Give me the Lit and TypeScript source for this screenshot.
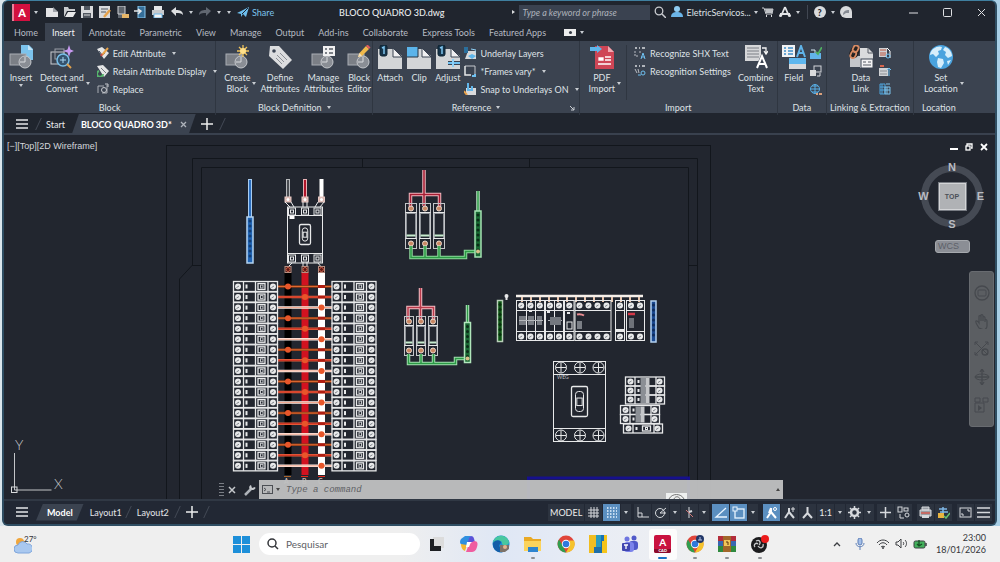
import { LitElement, html, svg, css, type SVGTemplateResult } from "lit";
import { customElement } from "lit/decorators.js";
import { classMap } from "lit/directives/class-map.js";

type Art = SVGTemplateResult;

const base = css`
  * { box-sizing: border-box; }
  :host { display: block; font-family: Lato, "Open Sans", sans-serif; font-size: 9px; line-height: 11px; color: #dfe2e6; }
  button, input { font: inherit; color: inherit; background: none; border: 0; padding: 0; margin: 0; }
  button { display: flex; align-items: center; justify-content: center; white-space: nowrap; flex: none; }
  input { min-width: 0; outline: none; }
  svg { display: block; flex: none; }
  .row { display: flex; align-items: center; }
  .car { width: 0; height: 0; border: 2px solid transparent; border-top: 3px solid #c9cdd2; border-bottom: 0; flex: none; }
  .slash { width: 1px; height: 12px; background: #434a56; transform: skewX(-25deg); flex: none; }
`;

const icon = (art: Art, w = 12, h = w, vw = w, vh = h) =>
  html`<svg width=${w} height=${h} viewBox="0 0 ${vw} ${vh}" fill="none" aria-hidden="true">${art}</svg>`;

/* ---------- large ribbon art, 24 x 24 ---------- */
const blockShape = svg`<rect x="1" y="9" width="16" height="11" fill="#7b7f86" stroke="#a9adb3"/><circle cx="16" cy="17" r="6" fill="#8a8e95" stroke="#c4c7cb"/><path d="M16 12v5h-5" stroke="#d8dadd"/>`;
const sheet = svg`<path d="M0 4h15l9 7v13H0z" fill="#d3d5d7"/><path d="M15 3l9 9h-9z" fill="#f0f0f1" stroke="#3b4453"/>`;
const clipPin = svg`<rect x="2" y="0" width="7" height="11" rx="2" fill="#16344a" stroke="#0d2231"/><path d="M4 3l2-1v7" stroke="#7fc4ee" stroke-width="1.500"/>`;
const L: Record<string, Art> = {
  insert: svg`<path d="M12 0h8l4 4v11H12z" fill="#7cc3ec"/><path d="M19 0v5h5z" fill="#c4e4f6"/>${blockShape}`,
  detect: svg`<rect x="1" y="7" width="13" height="12" stroke="#c9ccd0"/><rect x="5" y="4" width="9" height="10" stroke="#9a9ea5"/><circle cx="13" cy="15" r="6" fill="#34536e" stroke="#78bfe9" stroke-width="1.500"/><path d="M10 15h6M13 12v6" stroke="#a8d8f4"/><path d="M17 19l4 4" stroke="#e0a14c" stroke-width="2"/><path d="M19 0l1.500 4.500L24 6l-3.500 1.500L19 12l-1.500-4.500L13 6l4.500-1.500z" fill="#c79af0"/>`,
  create: svg`${blockShape}<path d="M18 0v12M12 6h12M14 2l8 8M22 2l-8 8" stroke="#f2c45a" stroke-width="1.300"/><circle cx="18" cy="6" r="3" fill="#ffe08a"/>`,
  define: svg`<path d="M2 1h9l13 14-9 9L1 11z" fill="#dcdddf"/><circle cx="6" cy="6" r="1.800" fill="#3b4453"/><path d="M9 10l7 7M12 8l7 7M8 13l6 6" stroke="#8b8f95"/>`,
  manage: svg`${blockShape}<rect x="12" y="1" width="12" height="10" fill="#f0f0f1"/><path d="M14 4h2M18 4h4M14 8h2M18 8h4" stroke="#555b64" stroke-width="1.500"/>`,
  editor: svg`${blockShape}<path d="M11 12l1.500-4L19 1l3 3-7 7z" fill="#f0b94b"/><path d="M19 1l3 3 1.500-1.500-3-3z" fill="#e05b5b"/><path d="M11 12l1.500-4 2.500 3z" fill="#f4e2c0"/>`,
  attach: svg`${sheet}${clipPin}`,
  clip: svg`${sheet}<rect x="0" y="2" width="11" height="10" fill="#5bb4ea"/><path d="M11 2v10H0" stroke="#263442"/>`,
  adjust: svg`${sheet}${clipPin}<path d="M12 18h12" stroke="#3b4453" stroke-width="4"/><path d="M12 18h12" stroke="#6fc0f0" stroke-width="2"/><path d="M17 14v8" stroke="#8fd0f5" stroke-width="2"/>`,
  pdf: svg`<path d="M5 1h13l6 6v17H5z" fill="#cf4656"/><path d="M18 1v6h6z" fill="#f3aab2"/><path d="M9 13h4v2H9zM15 12h6M15 15h6M8 19h13" fill="#fff" stroke="#fff" stroke-width="1.300"/><path d="M0 2h7V0l5 4-5 4V6H0z" fill="#5fb7ec"/>`,
  combine: svg`<path d="M1 0h16v16H1z" fill="#d6d7d9"/><path d="M3 3h12M3 6h12M3 9h12M3 12h12" stroke="#7a7e85"/><path d="M11 24l6-14h4l4 14" fill="#3b4453"/><path d="M13 23l5-12 5 12M15 19h6" stroke="#fff" stroke-width="2"/><path d="M18 3h4v5M20 6l2 3 2-3" stroke="#f2f2f2" stroke-width="1.300"/>`,
  field: svg`<rect x="0" y="0" width="13" height="12" fill="#f1f2f3"/><path d="M2 3h2M6 3h5M2 6h2M6 6h5M2 9h2M6 9h5" stroke="#3f8fc9" stroke-width="1.300"/><path d="M15 12l4-11 4 11M16 8h6" stroke="#5fb3e8" stroke-width="2"/><rect x="7" y="13" width="17" height="6" fill="#5fb7ee"/><rect x="7" y="19" width="17" height="5" fill="#d9dadc"/>`,
  link: svg`<rect x="1" y="11" width="12" height="11" fill="#c4c6ca"/><path d="M11 3h8l5 5v15H11z" fill="#d9dbdd"/><path d="M19 3v5h5" stroke="#555b64"/><g stroke="#24211f" stroke-width="4"><rect x="3" y="3" width="5" height="8" rx="2.500" transform="rotate(25 5 7)"/></g><g stroke="#d88a62" stroke-width="1.800"><rect x="4" y="0" width="5" height="7" rx="2.500" transform="rotate(25 6 4)"/><rect x="2" y="6" width="5" height="7" rx="2.500" transform="rotate(25 4 9)"/></g><rect x="12" y="14" width="12" height="9" fill="#f3f3f4" stroke="#3b4453"/><path d="M14 17h3M19 17h3M14 20h8" stroke="#555b64"/>`,
  globe: svg`<circle cx="12" cy="12" r="12" fill="#4aa3de"/><path d="M4 4c4-3 7-3 9-2l-1 3-3 1 1 3-3 3-3-3-3 1c0-2 1-4 3-6zM16 2c4 1 7 5 7 9l-4 2-3-3 1-3-3-2zM9 13l5 1 1 4-3 5-3-1-1-5zM18 16l4-1-3 5z" fill="#d6eefb"/>`,
};

/* ---------- small ribbon art, 12 x 12 ---------- */
const S: Record<string, Art> = {
  edit: svg`<path d="M0 2l5-2 7 6-5 6z" fill="#e4e5e6"/><path d="M2 4l3 4 3-2" stroke="#3b4453"/><path d="M5 8l6-7" stroke="#e9a348" stroke-width="2"/><path d="M4 9l1-2" stroke="#c34b4b" stroke-width="2"/>`,
  retain: svg`<path d="M0 1l6-1 6 6-5 6z" fill="#e4e5e6"/><path d="M4 3l5 5" stroke="#747980"/><path d="M2 6a3 3 0 1 0 4 3" stroke="#56b56c" stroke-width="2"/>`,
  replace: svg`<path d="M1 10V3h6M10 2v8H5" stroke="#a9adb3"/><circle cx="7" cy="7" r="2.500" stroke="#c8cbd0"/><path d="M8 1h3v3" stroke="#c8cbd0"/>`,
  layers: svg`<path d="M4 4h8v8H1z" fill="#d6d8da"/><rect x="0" y="0" width="4" height="6" fill="#2b6f9c"/><path d="M4 9l4-2 4 2-4 3z" fill="#5eb4e8"/><path d="M7 2l5 1v3" stroke="#8fd0f5"/>`,
  frames: svg`<path d="M1 1h10v8" stroke="#c5c8cc"/><path d="M1 1v9h6" stroke="#e6e7e8" stroke-width="1.500"/><path d="M8 11h3v-2" stroke="#6fc0f0" stroke-width="2"/>`,
  snap: svg`<path d="M2 5h10v7H2z" fill="#d9dadc"/><path d="M4 0v7h4V3" stroke="#62b6ea" stroke-width="2"/><path d="M0 8l3 4" stroke="#e8a24a" stroke-width="2"/>`,
  shx: svg`<path d="M1 1h2M5 1h1M8 1h3" stroke="#d9dbde" stroke-width="1.500"/><path d="M1 4v5h4M5 5h2" stroke="#b9bcc2" stroke-dasharray="2 1"/><path d="M7 12l2-6 2 6M7 10h4" stroke="#6fc0f0"/>`,
  shxset: svg`<path d="M1 1h2M5 1h1M8 1h3" stroke="#d9dbde" stroke-width="1.500"/><path d="M1 4l2 4M4 4l1 4" stroke="#b9bcc2"/><circle cx="9" cy="8" r="2" stroke="#6fc0f0"/><path d="M4 10h3" stroke="#6fc0f0"/>`,
  update: svg`<rect x="0" y="6" width="11" height="6" fill="#62b4ea"/><path d="M1 3h4v3" stroke="#d5e7f2"/><path d="M6 5l2 2 4-7" stroke="#4fae62" stroke-width="1.800"/>`,
  ole: svg`<rect x="4" y="1" width="7" height="6" stroke="#d4d6da"/><rect x="0" y="5" width="6" height="6" fill="#d9dadc"/><path d="M7 11h3V8" stroke="#d4d6da"/>`,
  hyper: svg`<circle cx="5" cy="6" r="4.500" stroke="#59afe6"/><path d="M1 6h8M5 1v10M2 3h6M2 9h6" stroke="#59afe6"/><path d="M6 11h2M9 11h3" stroke="#d9a07c" stroke-width="2"/>`,
  down: svg`<rect x="0" y="1" width="8" height="9" fill="#cfd1d4"/><path d="M1 3h6M1 6h6M1 8h6" stroke="#bd5640"/><path d="M8 1l3 3v7" stroke="#fff"/><circle cx="9" cy="9" r="2" stroke="#6fc0f0"/>`,
  up: svg`<rect x="0" y="3" width="9" height="8" fill="#cfd1d4"/><path d="M1 1h4" stroke="#d7654c" stroke-width="2"/><path d="M1 6h7M1 9h7" stroke="#8b8f95"/><path d="M10 11V3M8 5l2-2 2 2" stroke="#6fc0f0"/>`,
  extract: svg`<path d="M1 1h5v10H1zM1 4h5M1 7h5M3 1v10" stroke="#4fa6df"/><path d="M6 4h5v7H6zM6 7h5M8 4v7M7 1h4" stroke="#7cc3ec"/>`,
};

/* ---------- title bar art ---------- */
const T: Record<string, Art> = {
  fresh: svg`<path d="M0 2h7l5 4v5H0z" fill="#e3e4e6"/><path d="M7 1l5 5H7z" fill="#9ea2a8"/>`,
  open: svg`<path d="M0 11V1h4l1 2h6v2H3z" fill="#c9cbce"/><path d="M1 11l3-5h8l-3 5z" fill="#e8e9ea"/>`,
  save: svg`<path d="M0 0h12v12H0z" fill="#d9dadc"/><path d="M3 0h6v4H3zM2 7h8v5H2z" fill="#50565f"/><path d="M3 9h6" stroke="#d9dadc"/>`,
  saveas: svg`<path d="M0 0h11v12H0z" fill="#d9dadc"/><path d="M2 3h7M2 6h5" stroke="#50565f"/><path d="M5 11l6-7" stroke="#e6a24b" stroke-width="2.500"/>`,
  mobile: svg`<path d="M1 0h7v12H1z" fill="#5f656d"/><path d="M1 0h7v8H1z" stroke="#d0d2d5"/><path d="M5 8h7v4H5z" fill="#e6b568"/>`,
  tomob: svg`<path d="M4 0h7v12H4z" fill="#356e99" stroke="#8ccaf0"/><path d="M0 5h6M4 3l3 2-3 3" stroke="#e5e7e9" stroke-width="1.500"/>`,
  print: svg`<path d="M2 0h8v4H2z" fill="#e4e5e7"/><path d="M0 4h12v5H0z" fill="#c7cacd"/><path d="M2 8h8v4H2z" fill="#f3f3f3" stroke="#6bb7e9"/>`,
  undo: svg`<path d="M0 5l5-4v3c4 0 7 1 7 5-2-2-4-2-7-2v3z" fill="#dcdee0"/>`,
  redo: svg`<path d="M12 5L7 1v3C3 4 0 5 0 9c2-2 4-2 7-2v3z" fill="#616771"/>`,
  share: svg`<path d="M0 7l12-6-3 10-3-3-2 3V8z" fill="#6cbdec"/><path d="M5 8l6-6" stroke="#20252f"/>`,
  mag: svg`<circle cx="5" cy="5" r="3.800" stroke="#c9ccd0" stroke-width="1.300"/><path d="M8 8l4 4" stroke="#c9ccd0" stroke-width="1.500"/>`,
  user: svg`<circle cx="6" cy="3" r="3" fill="#8fccf2"/><path d="M0 11c0-4 3-5 6-5s6 1 6 5z" fill="#6bb5e8"/>`,
  cart: svg`<path d="M0 2h2l2 6h6l1-5H3" stroke="#c9ccd0"/><path d="M3 3h8l-1 4H4z" fill="#bfc2c6"/><path d="M4 10h1M9 10h1" stroke="#d9dbdd" stroke-width="2"/>`,
  adsk: svg`<path d="M6 1l4 9M6 1L2 10M1 8h10" stroke="#e3e5e7" stroke-width="1.800"/><circle cx="1.500" cy="9.500" r="1.500" fill="#e3e5e7"/><circle cx="10.500" cy="9.500" r="1.500" fill="#e3e5e7"/>`,
  chat: svg`<path d="M6 0a6 6 0 1 0 0 12h6V6a6 6 0 0 0-6-6z" fill="#d8dadc"/><path d="M3 9c0-4 3-5 6-5v3H6z" fill="#868b93"/>`,
};

const sq = (art: Art, label: string) => html`<button aria-label=${label}>${icon(art)}</button>`;

@customElement("title-bar")
class TitleBar extends LitElement {
  static styles = [base, css`
    .bar { display: grid; grid-template-columns: 504fr 490fr; height: 22px; align-items: center; }
    .left { padding-left: 8px; }
    .logo { width: 18px; height: 17px; background: #d3103f; border-left: 2px solid #e8829b; font-size: 11px; font-weight: 900; color: #fff; }
    .tools { display: flex; justify-content: space-between; width: 118px; margin: 0 7px 0 8px; }
    .logo + .car { margin-left: 4px; }
    .hist { gap: 6px; margin-right: 6px; }
    .share { color: #7cc3ec; gap: 3px; font-size: 9px; }
    .name { margin-left: auto; margin-right: 62px; color: #e9ebed; font-weight: 500; }
    .right { padding-left: 6px; }
    .play { border: 2px solid transparent; border-left: 3px solid #d9dbdd; border-right: 0; margin-right: 4px; }
    .find { width: 131px; height: 15px; background: #3a4250; padding: 0 3px; font-style: italic; }
    .find::placeholder { color: #aeb3bb; opacity: 1; }
    .mag { margin: 0 5px 0 4px; }
    .acct { gap: 3px; }
    .apps { gap: 5px; margin-left: 4px; }
    .rule { width: 1px; height: 14px; background: #414752; margin: 0 1px 0 2px; }
    .help { width: 12px; height: 12px; border-radius: 6px; background: #d9dbdd; color: #20252f; font-weight: 900; }
    .win { margin-left: auto; gap: 25px; padding-right: 9px; }
  `];
  render() {
    return html`<header class="bar">
      <div class="row left">
        <button class="logo" aria-label="Application menu">A</button><i class="car"></i>
        <div class="tools">
          ${sq(T.fresh, "New")}${sq(T.open, "Open")}${sq(T.save, "Save")}${sq(T.saveas, "Save As")}${sq(T.mobile, "Open from mobile")}${sq(T.tomob, "Save to mobile")}${sq(T.print, "Plot")}
        </div>
        <div class="row hist">${sq(T.undo, "Undo")}<i class="car"></i>${sq(T.redo, "Redo")}<i class="car"></i><i class="car"></i></div>
        <button class="share">${icon(T.share)}Share</button>
        <span class="name">BLOCO QUADRO 3D.dwg</span>
      </div>
      <div class="row right">
        <i class="play"></i>
        <input class="find" aria-label="Search help" placeholder="Type a keyword or phrase">
        <button class="mag" aria-label="Search">${icon(T.mag)}</button>
        <button class="acct">${icon(T.user)}EletricServicos...<i class="car"></i></button>
        <div class="row apps">${sq(T.cart, "Store")}${sq(T.adsk, "Autodesk apps")}<i class="car"></i><i class="rule"></i>
          <button class="help" aria-label="Help">?</button><i class="car"></i>${sq(T.chat, "Feedback")}</div>
        <div class="row win">
          <button aria-label="Minimize">${icon(svg`<path d="M0 5h9" stroke="#dfe1e4"/>`, 9)}</button>
          <button aria-label="Maximize">${icon(svg`<rect x="0.500" y="0.500" width="8" height="8" rx="1" stroke="#dfe1e4"/>`, 9)}</button>
          <button aria-label="Close">${icon(svg`<path d="M1 1l7 7M8 1L1 8" stroke="#dfe1e4"/>`, 9)}</button>
        </div>
      </div>
    </header>`;
  }
}

const big = (art: Art, lines: string[], drop: "" | "below" | "side" = "") => html`
  <button class="big"><span class="stack">${icon(art, 24, 24)}<span class="lbl">${lines.map((t) => html`<span>${t}</span>`)}</span>
    ${drop === "below" ? html`<i class="car"></i>` : ""}</span>${drop === "side" ? html`<i class="car side"></i>` : ""}</button>`;
const small = (art: Art, text: string, drop = false) => html`<button class="small">${icon(art)}<span>${text}</span>${drop ? html`<i class="car"></i>` : ""}</button>`;
const mini = (art: Art, label: string) => html`<button class="small" aria-label=${label}>${icon(art)}</button>`;

@customElement("ribbon-bar")
class RibbonBar extends LitElement {
  static styles = [base, css`
    .tabs { display: flex; height: 18px; padding-left: 3px; align-items: stretch; color: #b6bbc3; }
    .tab { padding: 0 7px; }
    .tab.on { background: #3b4350; color: #f2f3f4; }
    .cam { width: 12px; height: 7px; background: #eceded; margin: 0 4px 0 11px; align-self: center; display: flex; align-items: center; justify-content: center; }
    .cam::after { content: ""; width: 3px; height: 3px; border-radius: 2px; background: #353b46; }
    .tabs > .car { align-self: center; }
    .panels { display: grid; grid-template-columns: 212fr 157fr 206fr 198fr 49fr 87fr 81fr; height: 72px; background: #3b4350; }
    .panel { display: flex; flex-direction: column; border-right: 1px solid #2f3641; padding-top: 4px; min-width: 0; }
    .panel:last-child { border: 0; }
    .body { display: flex; flex: 1; align-items: flex-start; min-width: 0; }
    .foot { display: flex; justify-content: center; align-items: center; gap: 5px; height: 15px; white-space: nowrap; }
    .big { align-items: stretch; }
    .stack { display: flex; flex-direction: column; align-items: center; }
    .stack > .car { margin-top: 1px; }
    .lbl { display: flex; flex-direction: column; align-items: center; margin-top: 3px; }
    .side { align-self: flex-end; margin: 0 0 9px 2px; }
    .list { display: flex; flex-direction: column; align-items: flex-start; gap: 6px; padding-top: 2px; }
    .small { gap: 4px; height: 12px; }
    .small .car { margin-left: 2px; }
    .b1 { padding-left: 5px; gap: 7px; }
    .b2 { padding-left: 8px; gap: 4px; }
    .b3 { padding-left: 4px; gap: 4px; }
    .b4 { padding-left: 9px; gap: 5px; }
    .b4 .list { border-left: 1px solid #2f3641; padding: 2px 2px 23px 7px; }
    .b5 { padding-left: 4px; gap: 4px; }
    .b6 { padding-left: 22px; gap: 6px; }
    .b7 { padding-left: 10px; }
    .last { justify-content: flex-start; padding-left: 8px; }
    .corner { margin-left: auto; padding-right: 4px; }
    .ref::before { content: ""; width: 10px; margin-right: auto; }
  `];
  render() {
    const tabs = ["Home", "Insert", "Annotate", "Parametric", "View", "Manage", "Output", "Add-ins", "Collaborate", "Express Tools", "Featured Apps"];
    return html`
      <nav class="tabs">${tabs.map((t) => html`<button class=${classMap({ tab: true, on: t === "Insert" })}>${t}</button>`)}<i class="cam"></i><i class="car"></i></nav>
      <div class="panels">
        <section class="panel"><div class="body b1">
          ${big(L.insert, ["Insert"], "below")}${big(L.detect, ["Detect and", "Convert"], "side")}
          <div class="list">${small(S.edit, "Edit Attribute", true)}${small(S.retain, "Retain Attribute Display", true)}${small(S.replace, "Replace")}</div>
        </div><div class="foot">Block</div></section>
        <section class="panel"><div class="body b2">
          ${big(L.create, ["Create", "Block"], "side")}${big(L.define, ["Define", "Attributes"])}${big(L.manage, ["Manage", "Attributes"])}${big(L.editor, ["Block", "Editor"])}
        </div><div class="foot">Block Definition<i class="car"></i></div></section>
        <section class="panel"><div class="body b3">
          ${big(L.attach, ["Attach"])}${big(L.clip, ["Clip"])}${big(L.adjust, ["Adjust"])}
          <div class="list">${small(S.layers, "Underlay Layers")}${small(S.frames, "*Frames vary*", true)}${small(S.snap, "Snap to Underlays ON", true)}</div>
        </div><div class="foot ref">Reference<i class="car"></i><span class="corner">${icon(svg`<path d="M1 1l4 4M5 2v3H2" stroke="#c9cdd2"/>`, 6)}</span></div></section>
        <section class="panel"><div class="body b4">
          ${big(L.pdf, ["PDF", "Import"], "side")}
          <div class="list">${small(S.shx, "Recognize SHX Text")}${small(S.shxset, "Recognition Settings")}</div>
          ${big(L.combine, ["Combine", "Text"])}
        </div><div class="foot">Import</div></section>
        <section class="panel"><div class="body b5">
          ${big(L.field, ["Field"])}<div class="list">${mini(S.update, "Update fields")}${mini(S.ole, "OLE object")}${mini(S.hyper, "Hyperlink")}</div>
        </div><div class="foot">Data</div></section>
        <section class="panel"><div class="body b6">
          ${big(L.link, ["Data", "Link"])}<div class="list">${mini(S.down, "Download from source")}${mini(S.up, "Upload to source")}${mini(S.extract, "Extract data")}</div>
        </div><div class="foot">Linking &amp; Extraction</div></section>
        <section class="panel"><div class="body b7">${big(L.globe, ["Set", "Location"], "side")}</div><div class="foot last">Location</div></section>
      </div>`;
  }
}

@customElement("file-tabs")
class FileTabs extends LitElement {
  static styles = [base, css`
    .bar { display: flex; align-items: center; height: 22px; padding: 2px 0 0 12px; border-bottom: 2px solid #39414e; }
    .menu { margin-right: 10px; }
    .start { margin: 0 7px; color: #e9ebed; }
    .doc { height: 20px; gap: 8px; padding: 0 9px; margin-right: 5px; background: #3b4350; color: #fff; font-weight: 700;
      clip-path: polygon(7px 0, 100% 0, calc(100% - 7px) 100%, 0 100%); }
    .add { margin-right: 9px; }
  `];
  render() {
    return html`<nav class="bar">
      <button class="menu" aria-label="File tab menu">${icon(svg`<path d="M0 2h12M0 6h12M0 10h12" stroke="#e3e5e7" stroke-width="1.500"/>`)}</button>
      <i class="slash"></i><button class="start">Start</button>
      <button class="doc">BLOCO QUADRO 3D*${icon(svg`<path d="M1 1l5 5M6 1L1 6" stroke="#aeb3bb" stroke-width="1.300"/>`, 7)}</button>
      <button class="add" aria-label="New tab">${icon(svg`<path d="M0 6h12M6 0v12" stroke="#eceded" stroke-width="1.500"/>`)}</button><i class="slash"></i>
    </nav>`;
  }
}

/* ---------- drawing ---------- */
const W = "#e8e9ea";
const rect = (x: number, y: number, w: number, h: number, stroke = W, fill = "none", sw = 1) =>
  svg`<rect x=${x} y=${y} width=${w} height=${h} stroke=${stroke} fill=${fill} stroke-width=${sw} />`;
const line = (d: string, stroke = W, sw = 1) => svg`<path d=${d} stroke=${stroke} stroke-width=${sw} fill="none"/>`;
const dot = (x: number, y: number, r: number, fill = W, stroke = "none") => svg`<circle cx=${x} cy=${y} r=${r} fill=${fill} stroke=${stroke} />`;
const range = (n: number) => Array.from({ length: n }, (_, i) => i);

const screw = (x: number, y: number, r = 3) => svg`${dot(x, y, r)}${line(`M${x - 1.5} ${y + 1}l2.500-1.500`, "#7c8188")}`;

const terminalBar = (x: number, y: number, h: number, fill: string, edge: string, hole: string, w = 6) =>
  svg`${rect(x, y, w, h, edge, fill, 1.5)}${range(Math.floor((h - 4) / 5)).map((i) => dot(x + w / 2, y + 4 + i * 5, 1.5, hole))}`;

const pole = (x: number, y: number) => svg`
  ${rect(x, y, 44, 10, W, "#22262f", 1.3)}
  ${screw(x + 4.500, y + 5)}${screw(x + 39.500, y + 5)}
  ${line(`M${x + 10} ${y}v10M${x + 22} ${y}v10M${x + 34.500} ${y}v10`, W, 1.3)}
  ${rect(x + 24.500, y + 2, 7, 6, W, "none", 1.3)}${rect(x + 27, y + 3.500, 2.5, 3, "#c3c5c8")}
  ${rect(x + 12.500, y + 3.5, 1, 3, W, W)}`;

const surge = (xs: number[], y: number, h: number, w: number) => xs.map((x) => svg`
  ${rect(x, y, w, h, "#c3c5c8")}${rect(x + 1, y + 10, w - 2, h - 20, "#8e9298")}
  ${line(`M${x} ${y + 9}h${w}M${x} ${y + h - 10}h${w}`)}${line(`M${x + 1} ${y + h - 13}h${w - 2}`, "#c6ebcd", 2)}
  ${dot(x + w / 2, y + 5, 2.5, "#c98763", "#ead9cc")}${dot(x + w / 2, y + h - 5, 2.5, "#c98763", "#ead9cc")}`);

const wire = (d: string, dark: string, light: string) => svg`${line(d, light, 3.500)}${line(d, dark, 1.500)}`;

const module = (x: number, w: number, n: number) => svg`
  ${rect(x, 300.500, w, 40)}${line(`M${x} 310.500h${w}M${x} 331.500h${w}`)}
  ${range(n).map((i) => svg`${screw(x + (w / n) * (i + 0.5), 305.5)}${screw(x + (w / n) * (i + 0.5), 336.500)}`)}`;

const crossed = (x: number, y: number) => svg`<circle cx=${x} cy=${y} r="5.500" stroke=${W} fill="none"/>${line(`M${x - 5} ${y}h10M${x} ${y - 5}v10`)}`;

const stackUnit = (x: number, y: number, rows: number) => svg`
  ${range(rows).map((i) => svg`${rect(x, y + i * 9, 39, 9, W, "none", 1.3)}${screw(x + 5, y + 4.5 + i * 9)}${screw(x + 34, y + 4.5 + i * 9)}${line(`M${x + 13} ${y + 3 + i * 9}v3`, W, 2)}`)}
  ${line(`M${x + 9.500} ${y}v${rows * 9}M${x + 30.500} ${y}v${rows * 9}`, W, 1.3)}
  ${rows > 1
    ? svg`${rect(x + 15, y + 1, 5, rows * 9 - 2, "none", "#8b8f95")}${rect(x + 20, y + 1, 4, rows * 9 - 2, "none", "#c4c6c9")}`
    : svg`${rect(x + 19, y + 2, 8, 5, W, "none", 1.3)}${rect(x + 22, y + 3.5, 2, 2)}`}`;

const toggle = (x: number, y: number, w: number, h: number) => svg`
  <rect x=${x} y=${y} width=${w} height=${h} rx="1.500" stroke=${W} fill="none" stroke-width="1.300"/>
  <rect x=${x + w / 4} y=${y + h / 6} width=${w / 2} height=${h * 2 / 3} rx="3" stroke=${W} fill="none"/>
  <rect x=${x + w / 3} y=${y + h / 2.600} width=${w / 3} height=${h / 4} stroke=${W} fill="none"/>`;

const drawing = () => {
  const frame = "#12161c";
  const busY = 281.500, pitch = 10.550;
  return svg`
  <g>
    ${rect(166.500, 145.500, 544, 400, frame)}
    ${line("M688.500 265.500h9V158.500H192.500V265L179.500 279V520M201.500 520V167.500H688.500V520M697.500 265V520M362.500 158v9M529.500 158v9M192 265.500h9", frame)}
    ${line("M250 179v39", "#a9ccf0", 4)}${line("M250 180v38", "#2c6fc0", 2)}
    ${terminalBar(247, 217, 46, "#1f63b4", "#b4d4f2", "#123d73")}
  </g>
  <g>
    ${line("M288 179v20", "#b8babd", 4)}${line("M288 180v19", "#4a4d52", 2)}
    ${line("M305 179v20", "#e7b1b4", 4)}${line("M305 180v19", "#b0152a", 2)}${line("M321.500 179v20", "#ffffff", 4)}
    ${[288, 305, 321.5].map((x) => svg`${rect(x - 3, 197, 6, 5, "#e7c9c4", "#d8b5ae")}${dot(x, 199.5, 1.5, "#fff")}`)}
    ${line("M285 202l5 5M291 202l3 5M318 202l-3 5M324 202l-4 5M303 202v5M307 202v5M292 263l-5 5M318 263l4 5M303 262v6M307 262v6")}
    ${rect(287.500, 207, 35, 56)}${line("M288 215.500h34M288 253.500h34")}
    ${[292, 305, 317.5].map((x) => svg`${rect(x - 3.5, 208, 7, 7)}${rect(x - 1.5, 210, 3, 3)}${rect(x - 3.5, 255, 7, 7)}${rect(x - 1.5, 257, 3, 3)}`)}
    ${rect(289.500, 216, 5, 3, "none", "#fff")}${toggle(299.5, 224.500, 11, 20)}
    ${rect(284.500, 272, 7, 203, "none", "#000")}${rect(301.500, 272, 7, 203, "none", "#d21220")}${rect(318, 272, 7, 203, "none", "#fff")}
    ${[288, 305, 321.5].map((x) => svg`${rect(x - 3, 266.5, 6, 6, "#b98d80", "#2a1715")}${dot(x, 269.5, 2, "#5a1a14", "#cf5b46")}`)}
    ${range(18).map((i) => {
      const y = busY + i * pitch + 5, k = i % 3;
      return svg`${line(`M278 ${y}H332`, ["#8e3a16", "#e8603c", "#fff0ea"][k], 2.500)}${line(`M278 ${y}H332`, ["#e06a30", "#c82e20", "#f0a48c"][k], 1)}
        ${k < 2 ? line(`M318 ${y}h7`, "#b01e12", 3) : ""}${dot([288, 305, 321.5][k], y, 3, "#e8562a")}`;
    })}
    ${range(18).map((i) => svg`${pole(233.500, busY + i * pitch)}${pole(332, busY + i * pitch)}`)}
    ${line("M284 476.500h7", "#a8642c")}${line("M301 476.500h7M318 476.500h7", "#e02a1c")}
    <g class="tag"><text x="284" y="484">A</text><text x="302" y="484">B</text><text x="318" y="484">C</text></g>
  </g>
  <g>
    ${wire("M424 170v36M410.500 208V194.500H439.500V208", "#a61d33", "#f0b9c0")}
    ${surge([405.500, 419.500, 433.500], 203.500, 45, 11)}
    ${wire("M411 246v11.500H465.500V251.500H478M425 246v11M439 246v11", "#2b9a45", "#8fd89c")}
    ${wire("M478 191v20", "#2f9a48", "#bfeac8")}${terminalBar(475, 211, 46, "#1a6a34", "#a4e3b2", "#0c2c18")}${dot(478, 251.5, 2, "#d8c08a")}
    ${wire("M420.500 288v34M408 321V307.500H433.500V321", "#b83a4b", "#f3c0c6")}
    ${surge([404.500, 416.500, 428.500], 316.500, 39, 9)}
    ${wire("M408.500 354v9.500H455.500V358.500H467M421 354v9M433.500 354v9", "#2b9a45", "#a5deb0")}
    ${wire("M467.500 305v18", "#2f9a48", "#bfeac8")}${terminalBar(464.500, 322.500, 40, "#1a6a34", "#b0e6bb", "#0c2c18")}${dot(467.5, 358.5, 2, "#d8c08a")}
    ${terminalBar(497.500, 300.500, 41, "#0d5413", "#b9d0b9", "#08300c", 5)}${line("M506.500 295v5", W, 2)}${dot(506.5, 296, 2)}
  </g>
  <g>
    ${line("M516 296h127", "#f6f0ea", 2.500)}${range(14).map((i) => line(`M${522 + i * 9} 297v5`, "#e9c6ae", 2))}
    ${module(516.500, 28, 3)}${module(545.500, 18, 2)}${module(564.500, 9.500, 1)}${module(575, 36, 4)}${module(615.500, 9, 1)}${module(626.500, 18, 2)}
    ${line("M526.500 300v41M535.500 300v41M554.500 300v41")}
    ${rect(519, 316, 7, 9, "none", "#777b82")}${rect(528, 316, 6, 9, "none", "#777b82")}${rect(537, 316, 5, 9, "none", "#777b82")}${line("M519 320.500h24M548 320.500h14", "#b3b6ba")}
    ${rect(550, 317, 11, 8, "none", "#74787f")}${rect(567, 322, 5, 7, W)}${rect(577, 321, 5, 8, "none", "#7b7f86")}${rect(629, 318, 5, 10, "none", "#6e7279")}
    ${line("M577 314.500q4-1 7 1", "#e98d92", 2)}${line("M628 314h7", "#d33848", 2.500)}${line("M616 330h9", W, 2)}
    ${line("M529 311h3M547 312h3M567 313h3", W, 2)}
    ${terminalBar(651, 301, 41, "#1b4a92", "#b4d2f2", "#0f2c5c", 5)}
  </g>
  <g>
    ${rect(553.500, 361.500, 52, 80)}${line("M554 374.500h52M554 428.500h52", W)}<text class="brand" x="557" y="379">WEG</text>
    ${[561, 580, 598.5].map((x) => svg`${crossed(x, 367.5)}${crossed(x, 435.5)}`)}${toggle(571.500, 386.500, 16, 30)}
    ${stackUnit(625.500, 377, 3)}${stackUnit(620.500, 405.500, 2)}${stackUnit(623.500, 424, 1)}
  </g>
  <path d="M528.500 520V478H688.500V520" stroke="#16108c" stroke-width="3" fill="none"/>
  <g>
    ${line("M14.500 453v37h37", "#c3c5c8")}${rect(11.500, 487, 5.500, 5.500, "#d8dadc")}
    <text class="axis" x="15" y="450">Y</text><text class="axis" x="54" y="489">X</text>
  </g>`;
};

@customElement("model-space")
class ModelSpace extends LitElement {
  static styles = [base, css`
    :host { position: relative; flex: 1; min-height: 0; overflow: hidden; background: #22262f; }
    .sheet { position: absolute; inset: 0; width: 100%; height: 100%; }
    .tag text { font-size: 7px; fill: #e8d8d0; }
    .brand { font-size: 5px; fill: #c3c5c8; }
    .axis { font-size: 14px; fill: #c3c5c8; font-weight: 300; }
    .view { position: absolute; left: 3px; top: 6px; font-family: "Liberation Sans", sans-serif; color: #d4d7db; }
    .mdi { position: absolute; right: 7px; top: 8px; display: flex; gap: 7px; }
    .cube { position: absolute; right: 8px; top: 26px; display: grid; grid-template-columns: 13px 44px 13px; grid-template-rows: 13px 44px 13px;
      place-items: center; font: 700 11px/13px "Liberation Sans", sans-serif; color: #b9bcc2; }
    .cube::before { content: ""; position: absolute; inset: 4px; border: 7px solid #454a54; border-radius: 50%; }
    .cube span { position: relative; }
    .n { grid-area: 1 / 2; } .w { grid-area: 2 / 1; } .e { grid-area: 2 / 3; } .s { grid-area: 3 / 2; }
    .top { position: relative; grid-area: 2 / 2; width: 27px; height: 27px; background: #b0b2b5; border: 1px solid #d3d4d6; outline: 1px solid #777b82; font-size: 7px; font-weight: 700; color: #4c5058; }
    .wcs { position: absolute; right: 25px; top: 105px; width: 35px; height: 13px; border-radius: 3px; background: #8b8e95; border: 1px solid #a6a9ae; color: #5d6169; justify-content: flex-start; padding-left: 2px; font-family: "Liberation Sans", sans-serif; }
    .nav { position: absolute; right: 1px; top: 136px; width: 25px; height: 156px; border-radius: 3px; background: #5b5e62; border: 1px solid #686b70; display: flex; flex-direction: column; align-items: center; padding: 13px 0; justify-content: space-between; }
    .cmd { position: absolute; left: 215px; right: 212px; bottom: 0; height: 19px; display: flex; align-items: center; }
    .grip { width: 5px; height: 13px; margin-right: 4px; background: repeating-linear-gradient(#7a7e85 0 1px, transparent 1px 3px); }
    .wrench { margin: 0 3px 0 8px; }
    .entry { display: flex; align-items: center; flex: 1; height: 100%; gap: 3px; padding: 0 3px; background: rgba(190, 191, 192, 0.960); }
    .entry input { flex: 1; font: italic 9px "Liberation Mono", monospace; color: #444; margin-left: 3px; }
    .entry input::placeholder { color: #5f6165; opacity: 1; }
    .entry .car { border-top-color: #444; }
    .eye { align-self: flex-end; margin-right: 86px; }
    .rise { transform: rotate(180deg); }
  `];
  render() {
    const n = "#46494e";
    return html`
      <svg class="sheet" aria-label="Drawing"><g transform="translate(-4 -135)">${drawing()}</g></svg>
      <span class="view">[−][Top][2D Wireframe]</span>
      <div class="mdi">
        <button aria-label="Minimize view">${icon(svg`<path d="M0 6h8" stroke="#fff" stroke-width="2"/>`, 8)}</button>
        <button aria-label="Restore view">${icon(svg`<path d="M2 3V1h5v4H6" stroke="#fff" stroke-width="1.300"/><rect x="1" y="3" width="4" height="4" stroke="#fff" stroke-width="1.300"/>`, 8)}</button>
        <button aria-label="Close view">${icon(svg`<path d="M1 1l6 6M7 1L1 7" stroke="#fff" stroke-width="1.800"/>`, 8)}</button>
      </div>
      <div class="cube"><span class="n">N</span><span class="w">W</span><button class="top">TOP</button><span class="e">E</span><span class="s">S</span></div>
      <button class="wcs">WCS</button>
      <div class="nav">
        <button aria-label="Navigation wheel">${icon(svg`<circle cx="8" cy="8" r="7" stroke=${n} stroke-width="1.300"/><rect x="4" y="5" width="8" height="6" rx="1" stroke=${n}/>`, 16)}</button>
        <button aria-label="Pan">${icon(svg`<path d="M5 15C3 12 1 9 2 8s3 2 3 2V3c1-1 2 0 2 1v4-6c1-1 2 0 2 1v5-4c1-1 2 0 2 1v4-2c1-1 2 0 2 1v5c0 2-2 4-3 4z" stroke=${n} stroke-width="1.200"/>`, 16)}</button>
        <button aria-label="Zoom">${icon(svg`<path d="M1 1l13 13M14 1L1 14M1 4V1h3M11 1h3v3M1 11v3h3" stroke=${n}/><circle cx="11" cy="11" r="3" stroke=${n} stroke-width="1.300"/>`, 16)}</button>
        <button aria-label="Orbit">${icon(svg`<path d="M8 0v16M6 3l2-3 2 3M6 13l2 3 2-3M1 8h14" stroke=${n} stroke-width="1.300"/><ellipse cx="8" cy="8" rx="7" ry="3" stroke=${n}/>`, 16)}</button>
        <button aria-label="Show motion">${icon(svg`<path d="M1 1h5v4H1zM9 1h5v4H9zM1 6h9v9H1z" stroke=${n}/><path d="M4 8l4 3-4 3z" fill=${n}/>`, 16)}</button>
      </div>
      <div class="cmd">
        <i class="grip"></i>
        <button aria-label="Close command line">${icon(svg`<path d="M1 1l6 6M7 1L1 7" stroke="#c5c8cc" stroke-width="1.500"/>`, 8)}</button>
        <button class="wrench" aria-label="Customize">${icon(svg`<path d="M1 11l6-6" stroke="#aeb2b8" stroke-width="2.500"/><path d="M11 3L8 4 7 1C4 2 5 6 8 6s4-2 3-3z" fill="#c5c8cc"/>`, 12)}</button>
        <div class="entry">
          ${icon(svg`<rect x="0.500" y="0.500" width="10" height="8" stroke="#4c4f54"/><path d="M2 3l2 1.500L2 6M5 7h3" stroke="#4c4f54"/>`, 11, 9)}<i class="car"></i>
          <input aria-label="Command line" placeholder="Type a command">
          <span class="eye">${icon(svg`<path d="M0 0h21v6H0z" fill="#eef0f0"/><path d="M3 6c3-6 12-6 15 0M8 6c1-3 5-3 6 0" stroke="#777"/>`, 21, 6)}</span>
          <i class="car rise"></i>
        </div>
      </div>`;
  }
}

const st = (art: Art, label: string, on = false) => html`<button class=${classMap({ st: true, on })} aria-label=${label}>${icon(art, 13, 13)}</button>`;
const drop = (label: string) => html`<button class="dd" aria-label=${label}><i class="car"></i></button>`;

@customElement("status-bar")
class StatusBar extends LitElement {
  static styles = [base, css`
    .bar { display: flex; align-items: center; height: 25px; padding: 0 3px 1px 12px; border-top: 2px solid #303844; background: #222834; }
    .menu { margin-right: 8px; }
    .model { height: 17px; padding: 0 11px; background: #3b4350; color: #fff; font-weight: 700; clip-path: polygon(7px 0, 100% 0, calc(100% - 7px) 100%, 0 100%); }
    .lay { margin: 0 6px; color: #e3e5e8; }
    .lay.last, .add { margin-left: 8px; margin-right: 8px; }
    .right { display: flex; align-items: center; gap: 1px; margin-left: auto; }
    .st { width: 17px; height: 17px; background: #2c333f; }
    .on { background: #5b8fc0; }
    .dd { width: 10px; height: 17px; background: #2c333f; }
    .txt { height: 17px; padding: 0 2px; background: #2c333f; color: #eceded; }
    .gap { width: 1px; }
  `];
  render() {
    const c = "#d6d9dd", b = "#e9f5ff";
    return html`<footer class="bar">
      <button class="menu" aria-label="Layout menu">${icon(svg`<path d="M0 2h12M0 6h12M0 10h12" stroke="#e3e5e7" stroke-width="1.500"/>`)}</button>
      <button class="model">Model</button><button class="lay">Layout1</button><i class="slash"></i>
      <button class="lay last">Layout2</button><i class="slash"></i>
      <button class="add" aria-label="New layout">${icon(svg`<path d="M0 6h12M6 0v12" stroke="#eceded" stroke-width="1.500"/>`)}</button><i class="slash"></i>
      <div class="right">
        <button class="txt">MODEL</button>
        ${st(svg`<path d="M4 1v11M7 1v11M10 1v11M1 4h11M1 7h11M1 10h11" stroke=${c}/>`, "Grid")}
        ${st(svg`<path d="M2 2h10M2 5h10M2 8h10M2 11h10" stroke=${b} stroke-width="1.500" stroke-dasharray="1.500 1.500"/>`, "Snap", true)}${drop("Snap settings")}
        <i class="gap"></i>
        ${st(svg`<path d="M2 1v10h11M2 7h4v4" stroke=${c}/>`, "Ortho")}
        ${st(svg`<circle cx="6" cy="7" r="4.500" stroke=${c}/><path d="M6 7l6-5M6 7h6" stroke=${c}/>`, "Polar")}${drop("Polar settings")}
        ${st(svg`<path d="M6 1v11" stroke=${c}/><path d="M3 4l3 3 4 4" stroke="#d07878"/><path d="M6 6l3-1" stroke=${c} stroke-width="2"/>`, "Isometric")}${drop("Isometric settings")}
        <i class="gap"></i>
        ${st(svg`<path d="M12 2L2 11h11" stroke=${b} stroke-width="1.300"/>`, "Tracking", true)}
        ${st(svg`<rect x="3" y="3" width="9" height="9" stroke=${b} stroke-width="1.300"/><rect x="1" y="1" width="4" height="4" fill="#5b8fc0" stroke=${b}/>`, "Object snap", true)}${drop("Snap modes")}
        <i class="gap"></i><i class="gap"></i>
        ${st(svg`<path d="M6 2v4L2 12M6 6l5 6M6 2l-2 5" stroke="#fff" stroke-width="2"/><circle cx="10" cy="3" r="1.500" stroke="#fff"/>`, "Annotation visibility", true)}
        ${st(svg`<path d="M6 2v4L2 12M6 6l5 6" stroke=${c} stroke-width="2"/><path d="M10 1v5M8 3h4" stroke=${c}/>`, "Auto scale")}
        ${st(svg`<path d="M6.500 1v6L2 12M6.500 7l4.500 5" stroke=${c} stroke-width="2"/>`, "Annotation scale")}
        <button class="txt">1:1</button>${drop("Scale")}
        ${st(svg`<circle cx="6.500" cy="6.500" r="3.500" stroke=${c} stroke-width="2.500"/><path d="M6.500 0v3M6.500 10v3M0 6.500h3M10 6.500h3M2 2l2 2M9 9l2 2M11 2L9 4M2 11l2-2" stroke=${c} stroke-width="1.500"/>`, "Workspace")}${drop("Workspaces")}
        <i class="gap"></i>
        ${st(svg`<path d="M6.500 1v11M1 6.500h11" stroke=${c} stroke-width="1.500"/>`, "Annotation monitor")}
        ${st(svg`<rect x="1" y="1" width="4" height="5" stroke=${c}/><rect x="7" y="2" width="4" height="3" stroke=${c}/><circle cx="10" cy="9" r="2" stroke=${c}/><path d="M3 8v4h4" stroke=${c}/>`, "Isolate objects")}
        <i class="gap"></i><i class="gap"></i>
        ${st(svg`<path d="M3 1h7v3H3zM1 4h11v6H1z" stroke=${c} fill="#9a9ea5"/><path d="M2 7h9" stroke="#d25a50" stroke-width="1.500"/><path d="M3 9h7v3H3z" fill=${c}/>`, "Plot")}
        ${st(svg`<path d="M2 3h8M3 6h8M6 1v6" stroke="#7fb7e6" stroke-width="1.500"/><rect x="1" y="7" width="6" height="5" fill="#e8b33f"/><path d="M7 10l2 2 4-5" stroke="#67c06f" stroke-width="1.500"/>`, "Trusted")}
        <i class="gap"></i><i class="gap"></i>
        ${st(svg`<rect x="1" y="2" width="11" height="9" stroke=${c}/><path d="M8 4h2v2M5 9H3V7" stroke=${c}/>`, "Clean screen")}
        ${st(svg`<path d="M0 2h13M0 6.500h13M0 11h13" stroke=${c} stroke-width="1.500"/>`, "Customization")}
      </div>
    </footer>`;
  }
}

const chrome = svg`<circle cx="9" cy="9" r="8.500" fill="#e0453a"/><path d="M2 4.500L6.500 12 9 17.500A8.500 8.500 0 0 1 2 4.500z" fill="#2f9e4f"/><path d="M9 17.500L13 10 12 5.500h5A8.500 8.500 0 0 1 9 17.500z" fill="#f5c32c"/><circle cx="9" cy="9" r="4.200" fill="#fff"/><circle cx="9" cy="9" r="3.300" fill="#2f79dc"/>`;
const apps: { name: string; art: Art; state?: string }[] = [
  { name: "Task view", art: svg`<rect x="6" y="2" width="11" height="11" fill="#dcdcdc"/><path d="M3 4h4v7h7v5H3z" fill="#1d1f22"/>` },
  { name: "Copilot", art: svg`<path d="M5 1h6l-3 9H4C0 10-1 7 1 4z" fill="#2f8fe0"/><path d="M11 1c3 0 3 3 4 6l-7 0 1-4z" fill="#5b52d8"/><path d="M1 9l6 1-2 6C2 15 1 12 1 9z" fill="#f4b733"/><path d="M14 6c4 0 4 3 3 6-1 4-3 5-6 5H6l3-8z" fill="#ef5da0"/><path d="M7 7h4l-2 5H6z" fill="#fff"/>` },
  { name: "Edge", art: svg`<circle cx="9" cy="9" r="8.500" fill="#1a8fd6"/><path d="M1 8C2-1 15-2 17 7c0 4-6 4-7 2 1-4-6-5-9-1z" fill="#48c7a0"/><path d="M1 8c3-4 8-3 8 0-4 3-1 7 6 6-6 7-15 2-14-6z" fill="#145ea8"/><path d="M8 10h9v4l-4 3H8z" fill="#7d7268"/><circle cx="13" cy="12" r="2" fill="#e3b48f"/>` },
  { name: "File Explorer", art: svg`<path d="M0 2h7l2 2h8v12H0z" fill="#e9a924"/><path d="M0 6h17v10H0z" fill="#fbd35c"/><path d="M4 12h10v5H4z" fill="#2d84cf"/>`, state: "run" },
  { name: "Chrome", art: chrome },
  { name: "Monitor", art: svg`<path d="M0 0h18v18H0z" fill="#f5c41a"/><path d="M7 0h8v6h-4v6H7z" fill="#1671b4"/><path d="M0 0h8v18H0z" fill="#f0bd20"/><path d="M8 6h5v12H5V12h3z" fill="#1f6fa8"/><path d="M7 0h5v12H7z" fill="#2a9bbd"/>` },
  { name: "Teams", art: svg`<circle cx="6" cy="4" r="2.500" fill="#6e75e0"/><circle cx="13" cy="3" r="2.500" fill="#5059c9"/><rect x="8" y="6" width="9" height="9" rx="3" fill="#5059c9"/><rect x="3" y="7" width="10" height="10" rx="3" fill="#7b83eb"/><rect x="1" y="8" width="8" height="8" rx="1" fill="#4046b0"/><path d="M3 10h4M5 10v4" stroke="#fff" stroke-width="1.300"/>` },
  { name: "AutoCAD", art: svg`<rect x="0" y="0" width="17" height="18" rx="2" fill="#c9123f"/><path d="M0 14h17v2q0 2-2 2H2q-2 0-2-2z" fill="#8b0b2c"/>`, state: "active" },
  { name: "Chrome profile", art: svg`${chrome}<circle cx="14" cy="4" r="4" fill="#223768"/><path d="M12 5h4M14 2v3" stroke="#b9c6e6"/>`, state: "run" },
  { name: "WinRAR", art: svg`<path d="M0 1h18v5H0z" fill="#b32c3a"/><path d="M0 6h18v5H0z" fill="#3867b0"/><path d="M0 11h18v6H0z" fill="#2f8a3e"/><path d="M5 1h8v16H5z" fill="#a2672a"/><path d="M6 5h6v6H6z" fill="#f0c65a"/><path d="M8 7h2v3" stroke="#5a3010"/>`, state: "run" },
  { name: "OBS", art: svg`<circle cx="8" cy="10" r="8" fill="#1c1c1e"/><path d="M5 6c4-2 5 2 3 4M12 9c1 4-3 5-5 2M4 12c-2-2 1-5 3-3" stroke="#c9cacc" stroke-width="1.300"/><circle cx="14" cy="4" r="4" fill="#ec1c1c"/>`, state: "run" },
];

@customElement("task-bar")
class TaskBar extends LitElement {
  static styles = [base, css`
    :host { color: #34363a; }
    .bar { display: grid; grid-template-columns: minmax(0, 230fr) minmax(0, 190fr) minmax(0, 356fr) minmax(0, 224fr); align-items: center; height: 36px;
      background: linear-gradient(90deg, #efefef 40%, #dfe7f5 50%, #e9edf5 60%, #f0f0f0 72%); }
    .weather { padding-left: 14px; align-items: flex-start; justify-self: start; gap: 0; }
    .weather span { margin-left: -8px; font-size: 8px; line-height: 8px; }
    .search-zone { gap: 9px; padding-left: 3px; }
    .box { flex: 1; min-width: 0; height: 22px; border-radius: 11px; background: #fff; gap: 7px; padding: 0 8px; }
    .box input { flex: 1; font-size: 10px; }
    .box input::placeholder { color: #5e6064; opacity: 1; }
    .apps { display: grid; grid-auto-flow: column; grid-auto-columns: 1fr; justify-items: center; }
    .app { position: relative; width: 28px; height: 31px; border-radius: 3px; }
    .active { background: #fcfcfc; }
    .run::after, .active::after { content: ""; position: absolute; bottom: 1px; width: 4px; height: 2px; border-radius: 1px; background: #8d8f93; }
    .active::after { width: 9px; background: #1872c4; }
    .mark { position: absolute; top: 8px; font-size: 10px; line-height: 10px; font-weight: 900; color: #fff; }
    .cad { position: absolute; top: 20px; font-size: 4px; line-height: 4px; font-weight: 900; color: #fff; }
    .tray { justify-content: flex-end; gap: 6px; padding-right: 14px; }
    .clock { flex-direction: column; align-items: flex-end; margin-left: 2px; line-height: 12px; }
    .first { margin-right: 6px; }
    .mic { margin-right: 4px; }
  `];
  render() {
    const k = "#3c3e42";
    return html`<footer class="bar">
      <button class="weather" aria-label="Weather">${icon(svg`<circle cx="6" cy="7" r="4" fill="#f0a63c"/><path d="M4 18a4 4 0 0 1 0-8 5 5 0 0 1 9-1 4 4 0 0 1 2 9z" fill="#a9c8ef" stroke="#7fa6dc"/>`, 18, 19)}<span>27°</span></button>
      <div class="row search-zone">
        <button aria-label="Start">${icon(svg`<path d="M0 0h8v8H0zM9 0h8v8H9zM0 9h8v8H0zM9 9h8v8H9z" fill="#1d8fd9"/>`, 17)}</button>
        <label class="row box">${icon(svg`<circle cx="5" cy="5" r="4" stroke="#34363a" stroke-width="1.500"/><path d="M8 8l3 3" stroke="#34363a" stroke-width="1.500"/>`)}<input aria-label="Pesquisar" placeholder="Pesquisar"></label>
      </div>
      <div class="apps">${apps.map((a) => html`<button class="app ${a.state ?? ""}" aria-label=${a.name}>${icon(a.art, 18)}${a.state === "active" ? html`<span class="mark">A</span><span class="cad">CAD</span>` : ""}</button>`)}</div>
      <div class="row tray">
        <button class="first" aria-label="Hidden icons">${icon(svg`<path d="M2 7l3-3 3 3" stroke=${k} stroke-width="1.300"/>`, 10)}</button>
        <button class="mic" aria-label="Microphone">${icon(svg`<rect x="4" y="0" width="4" height="7" rx="2" fill="#a4bfe8" stroke="#5d7fb8"/><path d="M2 5c0 5 8 5 8 0M6 9v3" stroke="#5d7fb8"/>`, 12)}</button>
        <button aria-label="Wi-Fi">${icon(svg`<path d="M1 5c3-4 9-4 12 0M3 7c2-3 6-3 8 0M5 9c1-1 3-1 4 0" stroke=${k}/><circle cx="7" cy="10" r="1" fill=${k}/>`, 13, 12)}</button>
        <button aria-label="Volume">${icon(svg`<path d="M1 4h2l3-3v9L3 7H1zM8 4c1 1 1 2 0 3M10 2c2 2 2 5 0 7" stroke=${k}/>`, 12)}</button>
        <button aria-label="Battery">${icon(svg`<rect x="1" y="3" width="11" height="7" rx="1.500" fill="#43b05c" stroke=${k}/><path d="M13 5v3" stroke=${k} stroke-width="1.500"/><path d="M6 2v6M4 6l2 2 3-2" stroke="#154f22" stroke-width="1.300"/>`, 15, 12)}</button>
        <button class="clock"><span>23:00</span><span>18/01/2026</span></button>
      </div>
    </footer>`;
  }
}

@customElement("app-root")
class AppRoot extends LitElement {
  static styles = [base, css`
    :host { display: flex; flex-direction: column; height: 100vh; background: linear-gradient(90deg, #dbe6ec, #a9cfe6); }
    .window { display: flex; flex-direction: column; flex: 1; min-height: 0; margin: 0 3px 0 2px; overflow: hidden; background: #20252e; border: 2px solid #2f4e63; border-top: 1px solid #3f7f9f; border-radius: 6px; }
    task-bar, status-bar, file-tabs, ribbon-bar, title-bar { flex: none; }
  `];
  render() {
    return html`
      <main class="window"><title-bar></title-bar><ribbon-bar></ribbon-bar><file-tabs></file-tabs><model-space></model-space><status-bar></status-bar></main>
      <task-bar></task-bar>`;
  }
}
